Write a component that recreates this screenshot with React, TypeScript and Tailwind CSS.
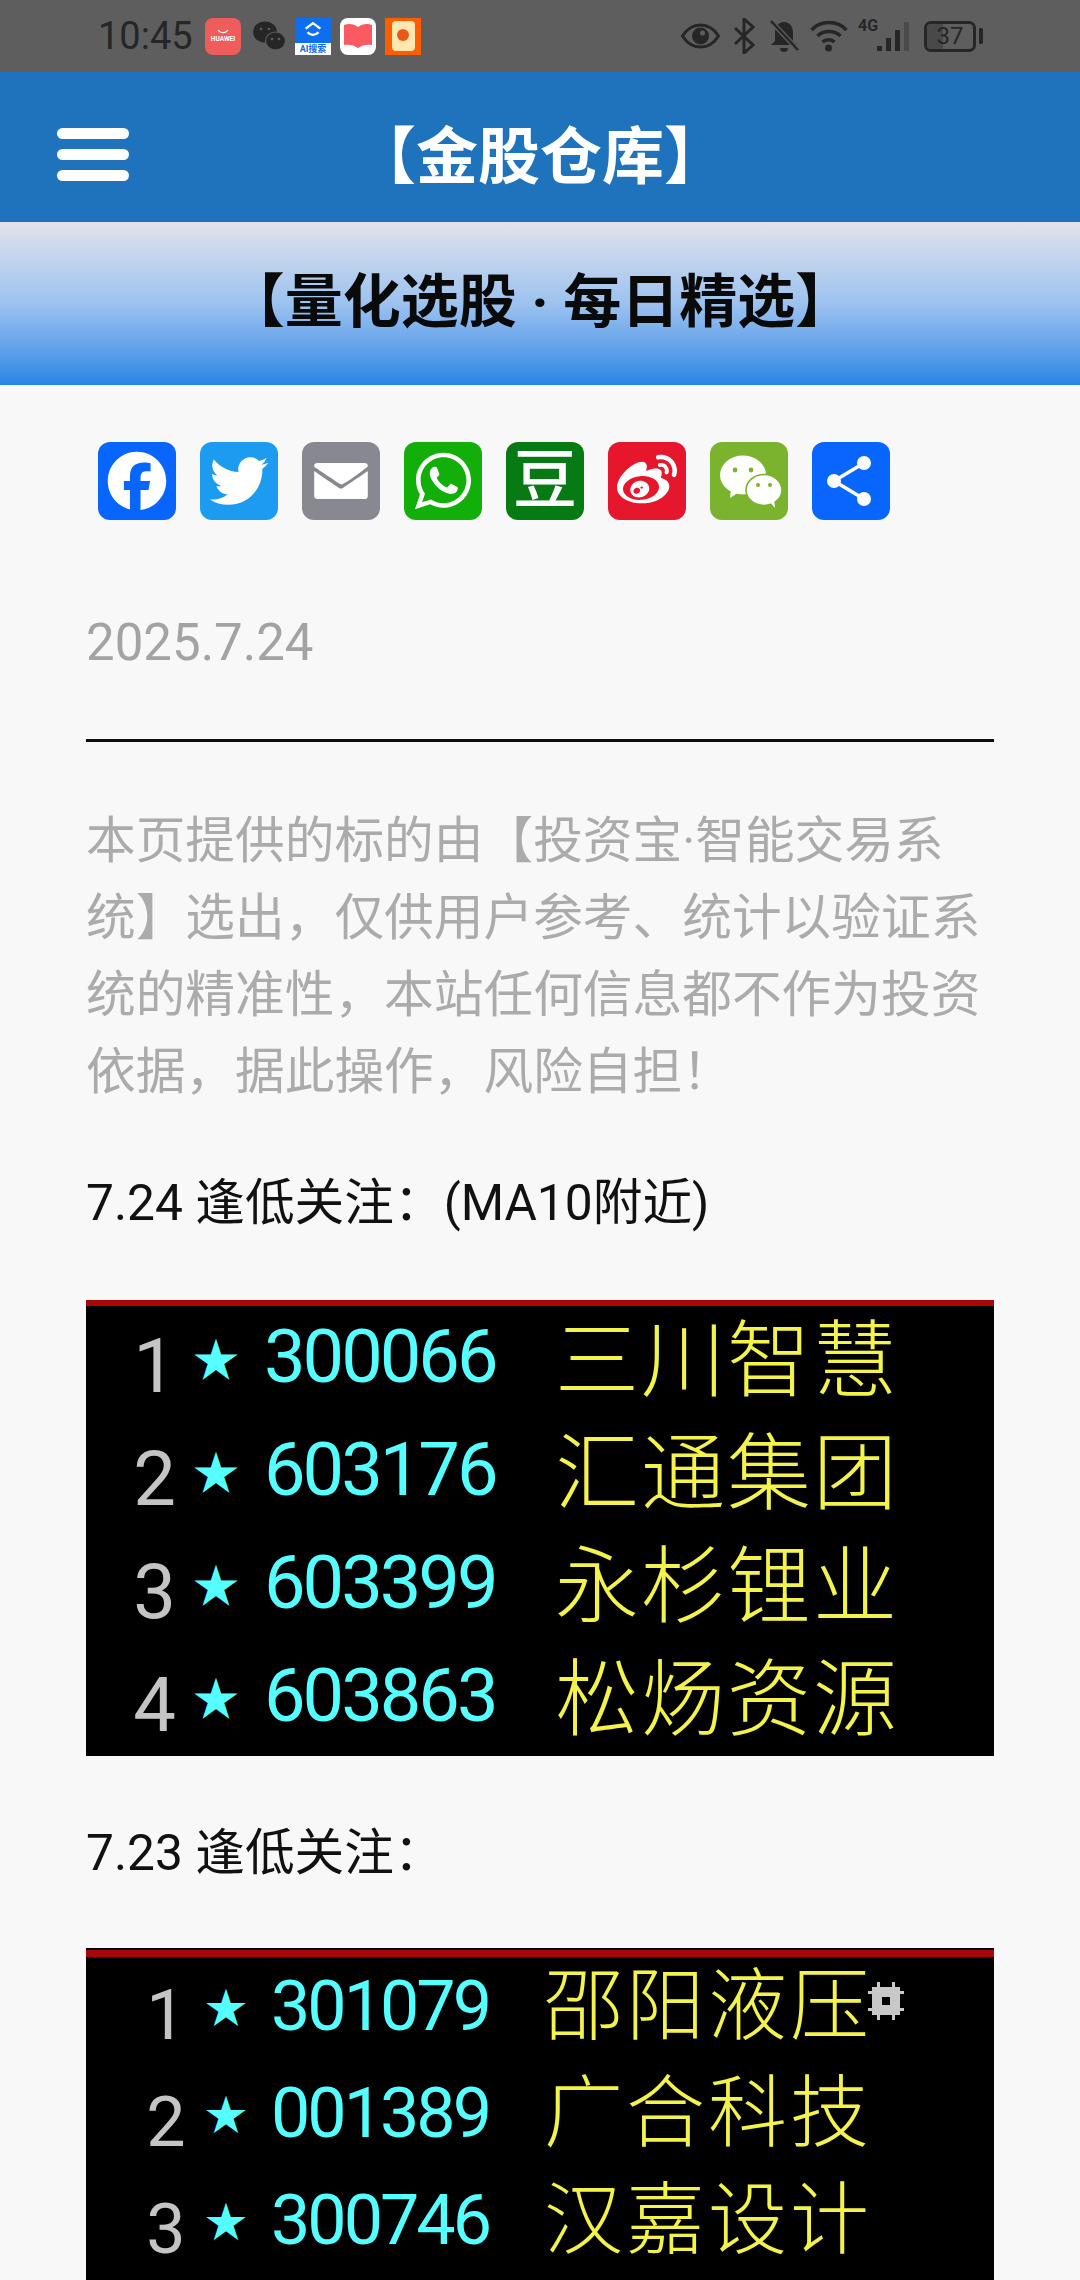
import type { ReactNode } from "react";
import { FaWeibo } from "react-icons/fa";

function Tile({ color, children }: { color: string; children: ReactNode }) {
  return (
    <div className={`w-[78px] h-[78px] rounded-[12px] flex items-center justify-center text-white ${color}`}>
      {children}
    </div>
  );
}

function Glyph({ children }: { children: ReactNode }) {
  return (
    <svg viewBox="0 0 32 32" className="w-[78px] h-[78px]" fill="#fff">
      {children}
    </svg>
  );
}

function ShareBar() {
  return (
    <div className="flex gap-[24px] ml-[12px]">
      <Tile color="bg-[#0866ff]">
        <Glyph>
          <path d="M28 16c0-6.627-5.373-12-12-12S4 9.373 4 16c0 5.628 3.875 10.35 9.101 11.647v-7.98h-2.474V16H13.1v-1.58c0-4.085 1.849-5.978 5.859-5.978.76 0 2.072.15 2.608.298v3.325c-.283-.03-.775-.045-1.386-.045-1.967 0-2.728.745-2.728 2.683V16h3.92l-.673 3.667h-3.247v8.245C23.395 27.195 28 22.135 28 16" />
        </Glyph>
      </Tile>
      <Tile color="bg-[#1d9bf0]">
        <Glyph>
          <path d="M28 8.557a10 10 0 0 1-2.828.775 4.93 4.93 0 0 0 2.166-2.725 9.7 9.7 0 0 1-3.13 1.194 4.92 4.92 0 0 0-3.593-1.55 4.924 4.924 0 0 0-4.794 6.049c-4.09-.21-7.72-2.17-10.15-5.15a4.94 4.94 0 0 0-.665 2.477c0 1.71.87 3.214 2.19 4.1a5 5 0 0 1-2.23-.616v.06c0 2.39 1.7 4.38 3.952 4.83-.414.115-.85.174-1.297.174q-.476-.001-.928-.086a4.935 4.935 0 0 0 4.6 3.42 9.9 9.9 0 0 1-6.114 2.107q-.597 0-1.175-.068a13.95 13.95 0 0 0 7.55 2.213c9.056 0 14.01-7.507 14.01-14.013q0-.32-.015-.637c.96-.695 1.795-1.56 2.455-2.55z" />
        </Glyph>
      </Tile>
      <Tile color="bg-[#888990]">
        <Glyph>
          <path d="M27 21.775v-9.9s-10.01 6.985-10.982 7.348C15.058 18.878 5 11.875 5 11.875v9.9c0 1.375.293 1.65 1.65 1.65h18.7c1.393 0 1.65-.242 1.65-1.65m-.017-11.841c0-1.002-.291-1.359-1.633-1.359H6.65c-1.38 0-1.65.429-1.65 1.43l.016.154s9.939 6.842 11 7.216C17.14 17.94 26.983 10.09 26.983 10.09z" />
        </Glyph>
      </Tile>
      <Tile color="bg-[#12af0a]">
        <Glyph>
          <path fillRule="evenodd" d="M16.21 4.41C9.973 4.41 4.917 9.465 4.917 15.7c0 2.134.592 4.13 1.62 5.832L4.5 27.59l6.25-2.002a11.24 11.24 0 0 0 5.46 1.404c6.234 0 11.29-5.055 11.29-11.29 0-6.237-5.056-11.292-11.29-11.292m0 20.69c-1.91 0-3.69-.57-5.173-1.553l-3.61 1.156 1.173-3.49a9.35 9.35 0 0 1-1.79-5.512c0-5.18 4.217-9.4 9.4-9.4s9.397 4.22 9.397 9.4c0 5.188-4.214 9.4-9.398 9.4zm5.293-6.832c-.284-.155-1.673-.906-1.934-1.012-.265-.106-.455-.16-.658.12s-.78.91-.954 1.096c-.176.186-.345.203-.628.048-.282-.154-1.2-.494-2.264-1.517-.83-.795-1.373-1.76-1.53-2.055s0-.445.15-.584c.134-.124.3-.326.45-.488.15-.163.203-.28.306-.47.104-.19.06-.36-.005-.506-.066-.147-.59-1.587-.81-2.173-.218-.586-.46-.498-.63-.505-.168-.007-.358-.038-.55-.045-.19-.007-.51.054-.78.332-.277.274-1.05.943-1.1 2.362-.055 1.418.926 2.826 1.064 3.023.137.2 1.874 3.272 4.76 4.537 2.888 1.264 2.9.878 3.43.85.53-.027 1.734-.633 2-1.297.266-.664.287-1.24.22-1.363-.07-.123-.26-.203-.54-.357z" />
        </Glyph>
      </Tile>
      <Tile color="bg-[#077a14]">
        <span className="text-[64px] leading-none font-medium">豆</span>
      </Tile>
      <Tile color="bg-[#e6162d]">
        <FaWeibo className="w-[60px] h-[60px]" />
      </Tile>
      <Tile color="bg-[#7bb32e]">
        <svg viewBox="0 0 78 78" className="w-[78px] h-[78px]">
          <ellipse cx="33" cy="33" rx="23" ry="19.5" fill="#fff" />
          <path d="M21 47l-1 9 9-6z" fill="#fff" />
          <circle cx="25" cy="28" r="2.4" fill="#7bb32e" />
          <circle cx="41" cy="28" r="2.4" fill="#7bb32e" />
          <ellipse cx="54" cy="48" rx="18" ry="15.5" fill="#fff" stroke="#7bb32e" strokeWidth="1.6" />
          <path d="M60 60l5 6-1-9z" fill="#fff" />
          <circle cx="48" cy="43" r="2" fill="#7bb32e" />
          <circle cx="60" cy="43" r="2" fill="#7bb32e" />
        </svg>
      </Tile>
      <Tile color="bg-[#0866ff]">
        <svg viewBox="0 0 78 78" className="w-[78px] h-[78px]">
          <path d="M52 21L22 39l30 18" stroke="#fff" strokeWidth="3.5" fill="none" />
          <circle cx="52" cy="21" r="7" fill="#fff" />
          <circle cx="22" cy="39" r="7" fill="#fff" />
          <circle cx="52" cy="57" r="7" fill="#fff" />
        </svg>
      </Tile>
    </div>
  );
}

function StatusBar() {
  return (
    <div className="h-[72px] bg-[#5f5e5f] flex items-center pl-[98px] text-[#262626]">
      <span className="text-[38px] leading-none w-[107px]">10:45</span>
      <div className="flex gap-[9px] items-center">
        <div className="w-[36px] h-[37px] rounded-[8px] bg-[#ee5c5c] flex flex-col items-center justify-center text-white">
          <svg viewBox="0 0 20 6" className="w-[14px] h-[5px]"><path d="M3 1c3 5 11 5 14 0" stroke="#fff" fill="none" strokeWidth="1.5" /></svg>
          <span className="text-[6.500px] leading-[10px] font-bold">HUAWEI</span>
        </div>
        <svg viewBox="0 0 33 32" className="w-[33px] h-[32px] ml-[2px] mr-[1px]">
          <ellipse cx="13" cy="12" rx="12" ry="10.5" fill="#262626" />
          <ellipse cx="23.5" cy="21" rx="10" ry="9" fill="#262626" stroke="#5f5e5f" strokeWidth="1.2" />
          <circle cx="20" cy="19" r="1.3" fill="#5f5e5f" />
          <circle cx="27" cy="19" r="1.3" fill="#5f5e5f" />
          <circle cx="9" cy="9" r="1.3" fill="#5f5e5f" />
          <circle cx="17" cy="9" r="1.3" fill="#5f5e5f" />
        </svg>
        <div className="w-[36px] h-[37px] bg-[#0d6fef] flex flex-col items-center">
          <svg viewBox="0 0 24 24" className="w-[22px] h-[25px]"><path d="M4 10l8-6 8 6M6 14a8 8 0 0 0 12 0" stroke="#fff" strokeWidth="2.5" fill="none" /></svg>
          <span className="w-full flex-1 bg-white text-[#0d6fef] text-[9px] leading-[12px] text-center font-bold">AI搜索</span>
        </div>
        <div className="w-[36px] h-[37px] rounded-[8px] bg-white flex items-center justify-center">
          <svg viewBox="0 0 30 28" className="w-[30px] h-[28px]"><path d="M1 3c5-2 10-1 14 2 4-3 9-4 14-2v20c-5-1-10 0-14 3-4-3-9-4-14-3z" fill="#fb5a62" /></svg>
        </div>
        <div className="w-[36px] h-[37px] bg-[#ff5d00] flex items-center justify-center">
          <div className="w-[23px] h-[30px] rounded-[4px] bg-[#ffe7b0] flex justify-center">
            <div className="w-[12px] h-[12px] mt-[8px] rounded-full bg-[#e9591b]" />
          </div>
        </div>
      </div>
      <svg viewBox="0 0 40 28" className="w-[41px] h-[28px] ml-[259px]"><path d="M2 14C7 6 13 3 20 3s13 3 18 11c-5 8-11 11-18 11S7 22 2 14z" fill="none" stroke="#262626" strokeWidth="3" /><circle cx="20" cy="14" r="8.5" fill="#262626" /><circle cx="22" cy="11" r="2.5" fill="#5f5e5f" /></svg>
      <svg viewBox="0 0 22 36" className="w-[22px] h-[36px] ml-[12px]"><path d="M2 10l18 17-9 8V1l9 8L2 26" fill="none" stroke="#262626" strokeWidth="3" /></svg>
      <svg viewBox="0 0 30 34" className="w-[32px] h-[34px] ml-[13px]"><path d="M15 3c6 0 9 5 9 11v8l4 4H2l4-4v-8c0-6 3-11 9-11z" fill="#262626" /><path d="M11 29h8a4 4 0 0 1-8 0z" fill="#262626" /><path d="M1 1l28 30" stroke="#5f5e5f" strokeWidth="5" /><path d="M2 2l27 29" stroke="#262626" strokeWidth="2.5" /></svg>
      <svg viewBox="0 0 37 34" className="w-[38px] h-[34px] ml-[10px]"><path d="M1 11C10 1 27 1 36 11M7 17c6-6 17-6 23 0M12 23c3-3 9-3 12 0" fill="none" stroke="#262626" strokeWidth="3.5" /><circle cx="18" cy="29" r="3.5" fill="#262626" /></svg>
      <div className="w-[18px] h-[34px] ml-[10px] self-start pt-[18px]">
        <span className="block text-[16px] leading-[16px] font-bold">4G</span>
      </div>
      <svg viewBox="0 0 34 32" className="w-[36px] h-[32px]"><rect x="0" y="26" width="5" height="5" fill="#262626" /><rect x="9" y="18" width="5" height="13" fill="#262626" /><rect x="18" y="10" width="5" height="21" fill="#262626" /><rect x="27" y="2" width="5" height="29" fill="#4a4a4a" /></svg>
      <div className="w-[52px] h-[31px] ml-[12px] border-[3px] border-[#262626] rounded-[7px] overflow-hidden relative flex items-center justify-center">
        <div className="absolute left-0 top-0 bottom-0 w-[16px] bg-[#494949]" />
        <span className="relative text-[24px] leading-none">37</span>
      </div>
      <div className="w-[4px] h-[16px] ml-[3px] rounded-r-[2px] bg-[#262626]" />
    </div>
  );
}

function Header() {
  return (
    <div className="h-[150px] bg-[#1f73bd] flex items-center pl-[57px]">
      <div className="w-[72px] flex flex-col gap-[10px] mt-[15px]">
        <div className="h-[11px] rounded-full bg-white" />
        <div className="h-[11px] rounded-full bg-white" />
        <div className="h-[11px] rounded-full bg-white" />
      </div>
      <div className="ml-[225px] text-[62px] font-bold text-white leading-none mt-[22px]">【金股仓库】</div>
    </div>
  );
}

type Row = { no: string; code: string; name: string; gear?: boolean };

// the stock lists are screenshots of a terminal in the source page
function Board({ rows, strip, rowsTop, pitch, noCol, codeCol, codeText, starCol, nameText }: {
  rows: Row[];
  strip: string;
  rowsTop: string;
  pitch: string;
  noCol: string;
  codeCol: string;
  codeText: string;
  starCol: string;
  nameText: string;
}) {
  return (
    <div className="bg-black h-[456px] overflow-hidden">
      <div className={`bg-[#a80609] ${strip}`} />
      <div className={rowsTop}>
        {rows.map((r) => (
          <div key={r.code} className={`flex items-center ${pitch}`}>
            <span className={`${noCol} text-center leading-none text-[#c4c4c4] pt-[18px] shrink-0`}>{r.no}</span>
            <span className={`${starCol} text-[#55ffff] leading-none pt-[6px] shrink-0`}>★</span>
            <span className={`${codeCol} ${codeText} text-[#55ffff] leading-none shrink-0`}>{r.code}</span>
            <span className={`${nameText} text-[#f3f34c] font-light leading-none shrink-0`}>{r.name}</span>
            {r.gear && (
              <svg viewBox="0 0 36 38" className="w-[36px] h-[38px] ml-[-4px] mb-[10px] shrink-0">
                <path fillRule="evenodd" d="M4 5h28v28H4zM14 15v8h8v-8z" fill="#c8c8c8" />
                <path d="M0 9h4v3H0zM0 26h4v3H0zM32 9h4v3h-4zM32 26h4v3h-4zM9 0h3v5H9zM24 0h3v5h-3zM9 33h3v5H9zM24 33h3v5h-3z" fill="#c8c8c8" />
              </svg>
            )}
          </div>
        ))}
      </div>
    </div>
  );
}

export default function App() {
  return (
    <div className="w-[1080px] h-[2280px] overflow-hidden bg-[#f8f8f9] font-['Roboto','Noto_Sans_CJK_SC',sans-serif]">
      <StatusBar />
      <Header />
      <div className="h-[163px] flex items-center justify-center bg-gradient-to-b from-[#e2e3ea] via-[#9cc2ef] to-[#2585e5]">
        <div className="text-[58px] font-bold leading-none text-[#0a0a0a] mt-[-4px]">【量化选股 · 每日精选】</div>
      </div>
      <div className="px-[86px] pt-[57px]">
        <ShareBar />
        <div className="mt-[88px] text-[51px] leading-[70px] text-[#a3a3a3]">2025.7.24</div>
        <div className="mt-[61px] h-[3px] bg-[#0d0d0d]" />
        <p className="mt-[61px] text-[49.7px] leading-[77px] text-[#ababab]">
          本页提供的标的由【投资宝·智能交易系统】选出，仅供用户参考、统计以验证系统的精准性，本站任何信息都不作为投资依据，据此操作，风险自担！
        </p>
        <div className="mt-[62px] text-[49.7px] leading-[60px] text-[#111]">7.24 逢低关注：(MA10附近)</div>
        <div className="mt-[67px]">
          <Board
            strip="h-[6px]"
            rowsTop="mt-[-6px]"
            pitch="h-[113px]"
            noCol="w-[107px] pl-[30px] text-[76px]"
            starCol="w-[71px] text-[46px]"
            codeCol="w-[291px]"
            codeText="text-[74px] tracking-[-3px]"
            nameText="text-[84px] tracking-[2px] pt-[10px]"
            rows={[
              { no: "1", code: "300066", name: "三川智慧" },
              { no: "2", code: "603176", name: "汇通集团" },
              { no: "3", code: "603399", name: "永杉锂业" },
              { no: "4", code: "603863", name: "松炀资源" },
            ]}
          />
        </div>
        <div className="mt-[67px] text-[49.7px] leading-[60px] text-[#111]">7.23 逢低关注：</div>
        <div className="mt-[65px]">
          <Board
            strip="h-[9px] border-t-[2px] border-black"
            rowsTop="mt-[-5px]"
            pitch="h-[107px]"
            noCol="w-[119px] pl-[41px] text-[70px]"
            starCol="w-[66px] text-[42px]"
            codeCol="w-[273px]"
            codeText="text-[70px] tracking-[-3px]"
            nameText="text-[79px] tracking-[3px] pt-[4px]"
            rows={[
              { no: "1", code: "301079", name: "邵阳液压", gear: true },
              { no: "2", code: "001389", name: "广合科技" },
              { no: "3", code: "300746", name: "汉嘉设计" },
            ]}
          />
        </div>
      </div>
    </div>
  );
}
